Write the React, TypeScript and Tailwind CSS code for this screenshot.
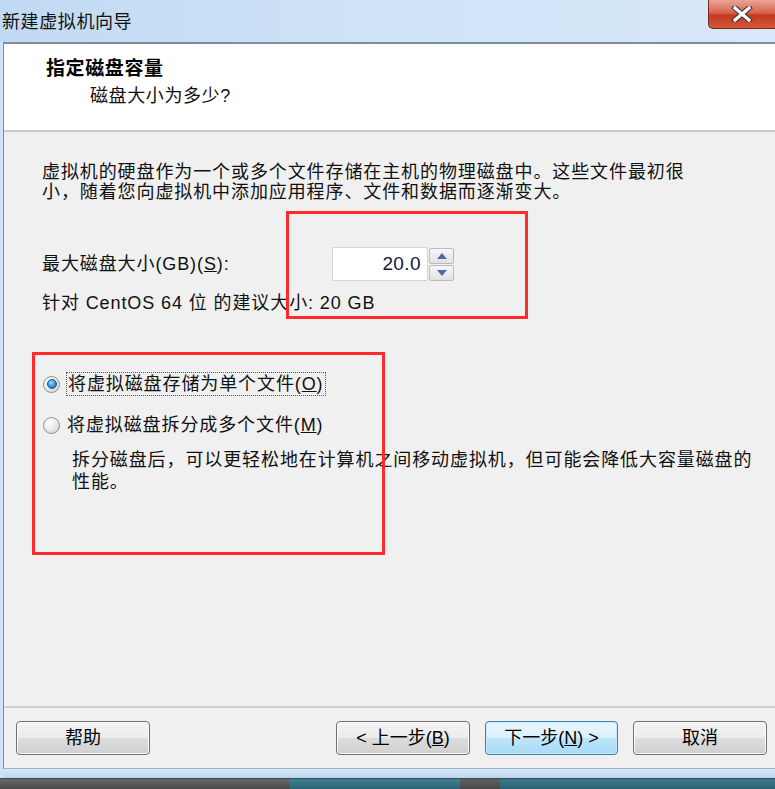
import React from 'react';

const cjk = { fontFamily: '"Liberation Sans", "Noto Sans CJK SC", sans-serif' };

function Radio({ checked }: { checked: boolean }) {
  return (
    <span className="relative flex h-[17px] w-[17px] shrink-0 items-center justify-center rounded-full border border-[#8e8f8f] bg-[radial-gradient(circle_at_35%_30%,#ffffff_0%,#e8e8e8_55%,#c8c8c8_100%)]">
      {checked && (
        <span className="h-[10px] w-[10px] rounded-full border border-[#1c5180] bg-[radial-gradient(circle_at_40%_35%,#a8e0ff_0%,#3aa3e8_45%,#0e5aa8_100%)]" />
      )}
    </span>
  );
}

function Btn({ children, primary }: { children: React.ReactNode; primary?: boolean }) {
  return (
    <div
      className={
        primary
          ? 'flex h-[34px] w-[133px] items-center justify-center rounded-[4px] border border-[#3c7fb1] bg-[linear-gradient(to_bottom,#eaf6fd_0%,#d9f0fc_50%,#bee6fd_50%,#a7d9f5_100%)] text-[18px] text-black shadow-[inset_0_0_0_1px_#cbeafc]'
          : 'flex h-[34px] w-[134px] items-center justify-center rounded-[4px] border border-[#707070] bg-[linear-gradient(to_bottom,#f4f4f4_0%,#ebebeb_50%,#dddddd_50%,#cfcfcf_100%)] text-[18px] text-black shadow-[inset_0_0_0_1px_#fbfbfb]'
      }
    >
      {children}
    </div>
  );
}

export default function App() {
  return (
    <div className="relative flex h-[789px] w-[775px] flex-col overflow-hidden bg-[#f0f0f0]" style={cjk}>
      {/* title bar */}
      <div className="relative flex h-[42px] shrink-0 items-center bg-[linear-gradient(to_right,#c1daf3_0%,#cfe3f7_50%,#d6e8f9_100%)] pl-[2px] pt-[3px]">
        <span className="text-[18px] tracking-[0.6px] text-[#111]">新建虚拟机向导</span>
        <div className="absolute right-0 top-0 flex h-[29px] w-[67px] items-center justify-center rounded-bl-[5px] border-b border-l border-[#7a2a1c] bg-[linear-gradient(to_bottom,#e9a595_0%,#d8664e_45%,#c4391f_55%,#d5573a_100%)]">
          <svg width="22" height="16" viewBox="0 0 22 16">
            <path d="M4 2 L18 14 M18 2 L4 14" stroke="#3b3b3b" strokeWidth="5.5" strokeLinecap="square" />
            <path d="M4 2 L18 14 M18 2 L4 14" stroke="#ffffff" strokeWidth="3.2" strokeLinecap="square" />
          </svg>
        </div>
      </div>

      {/* window frame */}
      <div className="flex flex-1 flex-col bg-[#cfe3f7] pl-[3px]">
        <div className="flex flex-1 flex-col border-l border-t-2 border-b border-l-[#7e8a96] border-t-[#7f8c9a] border-b-[#9fb2c4] bg-[#f0f0f0]">
          {/* header */}
          <div className="flex h-[88px] shrink-0 flex-col border-b-2 border-[#c9c9c9] bg-white pl-[42px] pt-[13px]">
            <div className="text-[19px] font-bold leading-[24px] tracking-[0.6px] text-black">指定磁盘容量</div>
            <div className="pl-[44px] pt-[4px] text-[18px] leading-[22px] tracking-[0.6px] text-[#111]">磁盘大小为多少?</div>
          </div>

          {/* body */}
          <div className="relative flex flex-1 flex-col pl-[38px] text-[18px] tracking-[0.9px] text-[#111]">
            <div className="pt-[30px] leading-[20px]">
              <div className="whitespace-nowrap">虚拟机的硬盘作为一个或多个文件存储在主机的物理磁盘中。这些文件最初很</div>
              <div className="whitespace-nowrap">小，随着您向虚拟机中添加应用程序、文件和数据而逐渐变大。</div>
            </div>

            <div className="flex items-center pt-[45px]">
              <span className="w-[290px] whitespace-nowrap">
                最大磁盘大小(GB)(<span className="underline">S</span>):
              </span>
              <div className="flex items-center">
                <div className="flex h-[34px] w-[96px] items-center justify-end rounded-[2px] border border-[#d4d4d4] bg-white pr-[6px] text-[19px] tracking-[0.4px] text-[#15163a]">
                  20.0
                </div>
                <div className="flex flex-col gap-[1px] pl-[1px]">
                  <div className="flex h-[16px] w-[25px] items-center justify-center rounded-[2px] border border-[#b8bcc0] bg-[linear-gradient(to_bottom,#f7f7f7,#e2e2e2)]">
                    <svg width="10" height="6" viewBox="0 0 10 6">
                      <path d="M0 6 L5 0 L10 6 Z" fill="#4d6aa8" />
                    </svg>
                  </div>
                  <div className="flex h-[16px] w-[25px] items-center justify-center rounded-[2px] border border-[#b8bcc0] bg-[linear-gradient(to_bottom,#f7f7f7,#e2e2e2)]">
                    <svg width="10" height="6" viewBox="0 0 10 6">
                      <path d="M0 0 L5 6 L10 0 Z" fill="#4d6aa8" />
                    </svg>
                  </div>
                </div>
              </div>
            </div>

            <div className="whitespace-nowrap pt-[11px] leading-[22px]">针对 CentOS 64 位 的建议大小: 20 GB</div>

            <div className="flex items-center gap-[6px] pl-[1px] pt-[58px]">
              <Radio checked />
              <span className="whitespace-nowrap border border-dotted border-[#555] px-[1px] leading-[22px]">
                将虚拟磁盘存储为单个文件(<span className="underline">O</span>)
              </span>
            </div>

            <div className="flex items-center gap-[7px] pl-[1px] pt-[18px]">
              <Radio checked={false} />
              <span className="whitespace-nowrap leading-[22px]">
                将虚拟磁盘拆分成多个文件(<span className="underline">M</span>)
              </span>
            </div>

            <div className="pl-[30px] pt-[13px] leading-[22px]">
              <div className="whitespace-nowrap">拆分磁盘后，可以更轻松地在计算机之间移动虚拟机，但可能会降低大容量磁盘的</div>
              <div className="whitespace-nowrap">性能。</div>
            </div>

            {/* annotation boxes */}
            <div className="pointer-events-none absolute left-[282px] top-[79px] h-[108px] w-[242px] border-[3px] border-[#ff2a2a]" />
            <div className="pointer-events-none absolute left-[28px] top-[220px] h-[203px] w-[353px] border-[3px] border-[#ff2a2a]" />
          </div>

          {/* footer */}
          <div className="flex h-[62px] shrink-0 items-center border-t-2 border-[#d0d0d0] pl-[12px]">
            <Btn>帮助</Btn>
            <div className="ml-[186px]">
              <Btn>
                &lt; 上一步(<span className="underline">B</span>)
              </Btn>
            </div>
            <div className="ml-[15px]">
              <Btn primary>
                下一步(<span className="underline">N</span>) &gt;
              </Btn>
            </div>
            <div className="ml-[15px]">
              <Btn>取消</Btn>
            </div>
          </div>
        </div>
        <div className="h-[9px] shrink-0 bg-[linear-gradient(to_bottom,#d6e8f9,#bcd6ef)]" />
      </div>

      {/* desktop strip below window */}
      <div className="flex h-[11px] shrink-0 border-t border-[#3d4a55]">
        <div className="w-[290px] bg-[linear-gradient(to_bottom,#6a6a6a,#4a4a4a)]" />
        <div className="w-[170px] bg-[linear-gradient(to_bottom,#3f7f92,#2b6578)]" />
        <div className="w-[40px] bg-[linear-gradient(to_bottom,#606060,#4a4a4a)]" />
        <div className="flex-1 bg-[linear-gradient(to_bottom,#3b788a,#2a6275)]" />
      </div>
    </div>
  );
}
